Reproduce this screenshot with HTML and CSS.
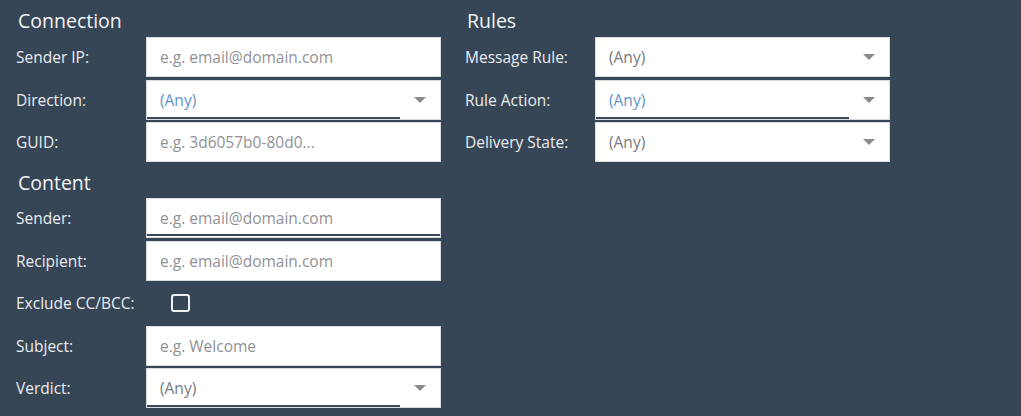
FILE: index.html
```html
<!DOCTYPE html>
<html lang="en">
<head>
  <meta charset="UTF-8">
  <title>Message Search Filters</title>
  <link rel="stylesheet" href="styles.css">
</head>
<body>

  <div class="filters">
    <div class="column">
      <h3 class="section-title">Connection</h3>
      <div class="row">
        <label>Sender IP:</label>
        <div class="field"><span class="placeholder">e.g. email@domain.com</span></div>
      </div>
      <div class="row">
        <label>Direction:</label>
        <div class="field select active"><span class="value blue">(Any)</span><span class="arrow"></span></div>
      </div>
      <div class="row">
        <label>GUID:</label>
        <div class="field"><span class="placeholder">e.g. 3d6057b0-80d0...</span></div>
      </div>

      <h3 class="section-title second">Content</h3>
      <div class="row">
        <label>Sender:</label>
        <div class="field active-full"><span class="placeholder">e.g. email@domain.com</span></div>
      </div>
      <div class="row">
        <label>Recipient:</label>
        <div class="field"><span class="placeholder">e.g. email@domain.com</span></div>
      </div>
      <div class="row">
        <label>Exclude CC/BCC:</label>
        <div class="check-cell"><span class="checkbox"></span></div>
      </div>
      <div class="row">
        <label>Subject:</label>
        <div class="field"><span class="placeholder">e.g. Welcome</span></div>
      </div>
      <div class="row">
        <label>Verdict:</label>
        <div class="field select active"><span class="value">(Any)</span><span class="arrow"></span></div>
      </div>
    </div>

    <div class="column">
      <h3 class="section-title">Rules</h3>
      <div class="row">
        <label>Message Rule:</label>
        <div class="field select"><span class="value">(Any)</span><span class="arrow"></span></div>
      </div>
      <div class="row">
        <label>Rule Action:</label>
        <div class="field select active"><span class="value blue">(Any)</span><span class="arrow"></span></div>
      </div>
      <div class="row">
        <label>Delivery State:</label>
        <div class="field select"><span class="value">(Any)</span><span class="arrow"></span></div>
      </div>
    </div>
  </div>

</body>
</html>
```

FILE: styles.css
```css
:root {
  --bg: #374656;
  --label: #e9ecef;
  --border: #d9dcdf;
  --muted: #8f9295;
  --value: #777a7d;
  --blue: #5d95cb;
}

body {
  font-family: 'Open Sans', 'Noto Sans', sans-serif;
  background-color: var(--bg);
  color: var(--label);
  margin: 0;
}

.filters {
  display: flex;
  gap: 24px;
  padding-left: 16px;
}

.column {
  width: 425px;
  display: flex;
  flex-direction: column;
}

.section-title {
  margin: 0;
  height: 37px;
  padding-left: 2px;
  font-size: 19.5px;
  font-weight: 500;
  line-height: 41px;
  color: #f1f3f5;
}

.section-title.second {
  height: 33.5px;
  line-height: 36px;
}

.row {
  display: grid;
  grid-template-columns: 130px 295px;
  align-items: center;
  height: 40px;
  margin-bottom: 2.5px;
}

label {
  font-size: 15.5px;
}

.field {
  position: relative;
  box-sizing: border-box;
  height: 40px;
  background-color: #fff;
  border: 1px solid var(--border);
  display: flex;
  align-items: center;
  padding-left: 13px;
  font-size: 15.5px;
}

.placeholder {
  color: var(--muted);
}

.value {
  color: var(--value);
}

.value.blue {
  color: var(--blue);
}

.arrow {
  position: absolute;
  right: 14px;
  top: 16px;
  width: 0;
  height: 0;
  border-left: 6px solid transparent;
  border-right: 6px solid transparent;
  border-top: 6px solid #8a8a8a;
}

.field.active::after,
.field.active-full::after {
  content: '';
  position: absolute;
  left: 0;
  bottom: 0;
  height: 2px;
  background-color: #3a4959;
}

.field.active::after {
  width: 253px;
}

.field.active-full::after {
  width: 100%;
  bottom: 1px;
}

.check-cell {
  padding-left: 25px;
}

.checkbox {
  display: block;
  box-sizing: border-box;
  width: 19px;
  height: 18px;
  border: 2px solid #eef0f2;
  border-radius: 3px;
}
```
